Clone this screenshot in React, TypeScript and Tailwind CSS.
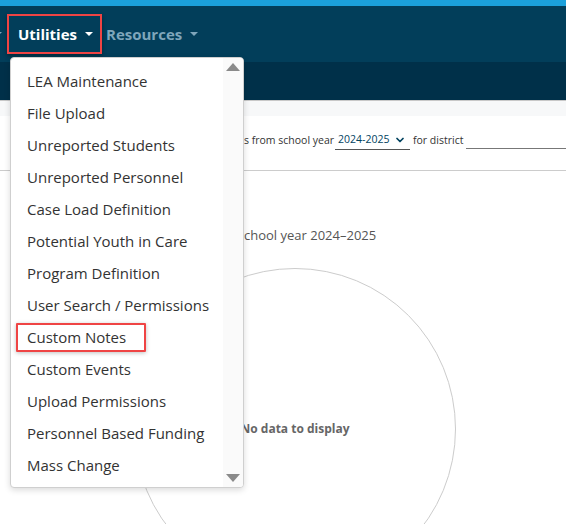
import { ChevronDown } from 'lucide-react';

const utilityItems = [
  'LEA Maintenance',
  'File Upload',
  'Unreported Students',
  'Unreported Personnel',
  'Case Load Definition',
  'Potential Youth in Care',
  'Program Definition',
  'User Search / Permissions',
  'Custom Notes',
  'Custom Events',
  'Upload Permissions',
  'Personnel Based Funding',
  'Mass Change',
];

function Caret({ className = '' }: { className?: string }) {
  return <span className={`inline-block h-0 w-0 border-x-[4px] border-t-[4px] border-x-transparent ${className}`} />;
}

function UtilitiesMenu() {
  return (
    <div className="absolute left-[10px] top-[57px] flex h-[431px] w-[234px] overflow-hidden rounded-[4px] border border-[#cfcfcf] bg-white shadow-[0_2px_6px_rgba(0,0,0,0.15)]">
      <ul className="flex-1 pt-[7px]">
        {utilityItems.map((item) => (
          <li key={item} className="flex h-[32px] items-center pl-[16px] text-[15px] text-[#333]">
            {item === 'Custom Notes' ? (
              <span className="-ml-[11px] rounded-[1px] border-2 border-[#ef4444] py-[2px] pl-[9px] pr-[18px] leading-[21px] shadow-[0_1px_4px_rgba(0,0,0,0.25)]">
                {item}
              </span>
            ) : (
              item
            )}
          </li>
        ))}
      </ul>
      <div className="flex w-[20px] flex-col items-center justify-between bg-[#fafafa] pb-[5px] pt-[5px]">
        <span className="h-0 w-0 border-x-[7px] border-b-[8px] border-x-transparent border-b-[#8a8a8a]" />
        <span className="h-0 w-0 border-x-[7px] border-t-[8px] border-x-transparent border-t-[#8a8a8a]" />
      </div>
    </div>
  );
}

export default function App() {
  return (
    <div className="relative h-[524px] w-full overflow-hidden bg-white font-['Open_Sans','Noto_Sans',sans-serif]">
      <div className="h-[6px] bg-[#1ba1dc]" />
      <nav className="flex h-[56px] items-center bg-[#023e5a]">
        <Caret className="-ml-[6px] border-t-[#7fa6bb]" />
        <div className="ml-[5px] flex h-[40px] items-center gap-[8px] border-2 border-[#ef4444] pl-[9px] pr-[7px] shadow-[0_2px_4px_rgba(0,0,0,0.35)]">
          <span className="text-[15px] font-bold text-white">Utilities</span>
          <Caret className="border-t-white" />
        </div>
        <div className="ml-[4px] flex items-center gap-[8px]">
          <span className="text-[15px] font-bold text-[#7fa6bb]">Resources</span>
          <Caret className="border-t-[#7fa6bb]" />
        </div>
      </nav>
      <div className="h-[38px] bg-[#003049]" />
      <div className="h-[16px] border-t border-[#c8c8c8] bg-[#f7f8f9]" />

      <div className="flex h-[55px] items-center border-b border-[#cccccc] pb-[4px] pl-[244px] text-[10.5px] text-[#333]">
        <span className="w-[87px] flex-none whitespace-nowrap">s from school year</span>
        <div className="ml-[4px] flex w-[75px] items-center justify-between border-b border-[#555] pb-[1px] pl-[3px] pr-[4px] text-[#02435f]">
          <span>2024-2025</span>
          <ChevronDown size={12} strokeWidth={3.5} />
        </div>
        <span className="ml-[3px]">for district</span>
        <div className="ml-[3px] h-[16px] flex-1 border-b border-[#777]" />
      </div>

      <div className="h-[97px] pl-[244px] pt-[55px]">
        <div className="whitespace-nowrap text-[13px] leading-[18px] text-[#555]">chool year 2024–2025</div>
      </div>

      <div className="relative ml-[134px] h-[322px] w-[322px]">
        <svg width="322" height="322" viewBox="0 0 322 322" className="absolute inset-0">
          <circle cx="161" cy="161" r="160.5" fill="none" stroke="#cccccc" strokeWidth="1" />
        </svg>
        <div className="absolute inset-0 flex items-center justify-center text-[12px] font-bold text-[#666]">
          No data to display
        </div>
      </div>

      <UtilitiesMenu />
    </div>
  );
}
